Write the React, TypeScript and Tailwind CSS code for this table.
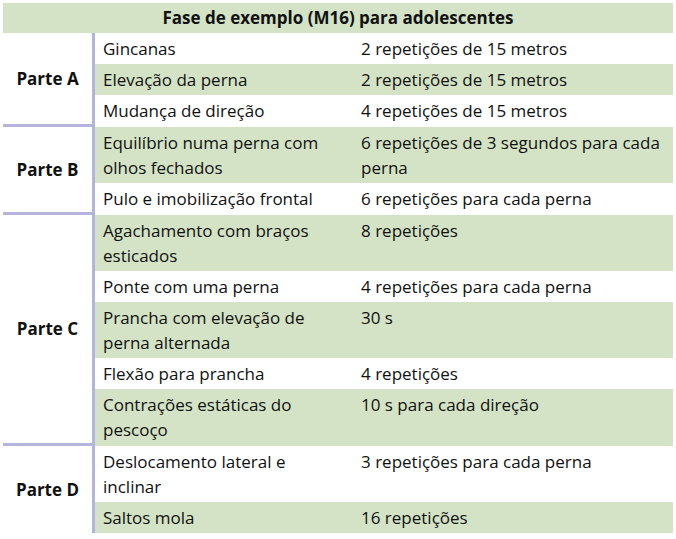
import React from "react";

type Row = { ex: React.ReactNode; desc: React.ReactNode; green: boolean };
type Part = { label: string; rows: Row[] };

const parts: Part[] = [
  {
    label: "Parte A",
    rows: [
      { ex: "Gincanas", desc: "2 repetições de 15 metros", green: false },
      { ex: "Elevação da perna", desc: "2 repetições de 15 metros", green: true },
      { ex: "Mudança de direção", desc: "4 repetições de 15 metros", green: false },
    ],
  },
  {
    label: "Parte B",
    rows: [
      {
        ex: (
          <>
            Equilíbrio numa perna com
            <br />
            olhos fechados
          </>
        ),
        desc: (
          <>
            6 repetições de 3 segundos para cada
            <br />
            perna
          </>
        ),
        green: true,
      },
      { ex: "Pulo e imobilização frontal", desc: "6 repetições para cada perna", green: false },
    ],
  },
  {
    label: "Parte C",
    rows: [
      {
        ex: (
          <>
            Agachamento com braços
            <br />
            esticados
          </>
        ),
        desc: "8 repetições",
        green: true,
      },
      { ex: "Ponte com uma perna", desc: "4 repetições para cada perna", green: false },
      {
        ex: (
          <>
            Prancha com elevação de
            <br />
            perna alternada
          </>
        ),
        desc: "30 s",
        green: true,
      },
      { ex: "Flexão para prancha", desc: "4 repetições", green: false },
      {
        ex: (
          <>
            Contrações estáticas do
            <br />
            pescoço
          </>
        ),
        desc: "10 s para cada direção",
        green: true,
      },
    ],
  },
  {
    label: "Parte D",
    rows: [
      {
        ex: (
          <>
            Deslocamento lateral e
            <br />
            inclinar
          </>
        ),
        desc: "3 repetições para cada perna",
        green: false,
      },
      { ex: "Saltos mola", desc: "16 repetições", green: true },
    ],
  },
];

export default function App() {
  return (
    <div
      className="w-[676px] h-[539px] bg-white p-[3px] text-[17px] text-[#111111] overflow-hidden"
      style={{ fontFamily: '"Open Sans", "Noto Sans", sans-serif' }}
    >
      <div className="h-[30px] bg-[#d4e3c5] flex items-center justify-center font-bold">
        Fase de exemplo (M16) para adolescentes
      </div>
      {parts.map((p, pi) => {
        const lastPart = pi === parts.length - 1;
        return (
          <div key={p.label} className="flex">
            <div
              className={
                "w-[92px] shrink-0 flex items-center justify-center font-bold border-r-[3px] border-[#b5b5dc] " +
                (lastPart ? "" : "border-b-[3px]")
              }
            >
              {p.label}
            </div>
            <div className="flex-1 flex flex-col">
              {p.rows.map((r, ri) => {
                const lastRow = ri === p.rows.length - 1 && !lastPart;
                return (
                  <div
                    key={ri}
                    className={
                      "flex leading-[25px] pt-[3px] whitespace-nowrap " +
                      (lastRow ? "pb-[4px] " : "pb-[3px] ") +
                      (r.green ? "bg-[#d4e3c5]" : "bg-white")
                    }
                  >
                    <div className="w-[258px] shrink-0 pl-[8px]">{r.ex}</div>
                    <div className="flex-1 pl-[8px]">{r.desc}</div>
                  </div>
                );
              })}
            </div>
          </div>
        );
      })}
    </div>
  );
}
